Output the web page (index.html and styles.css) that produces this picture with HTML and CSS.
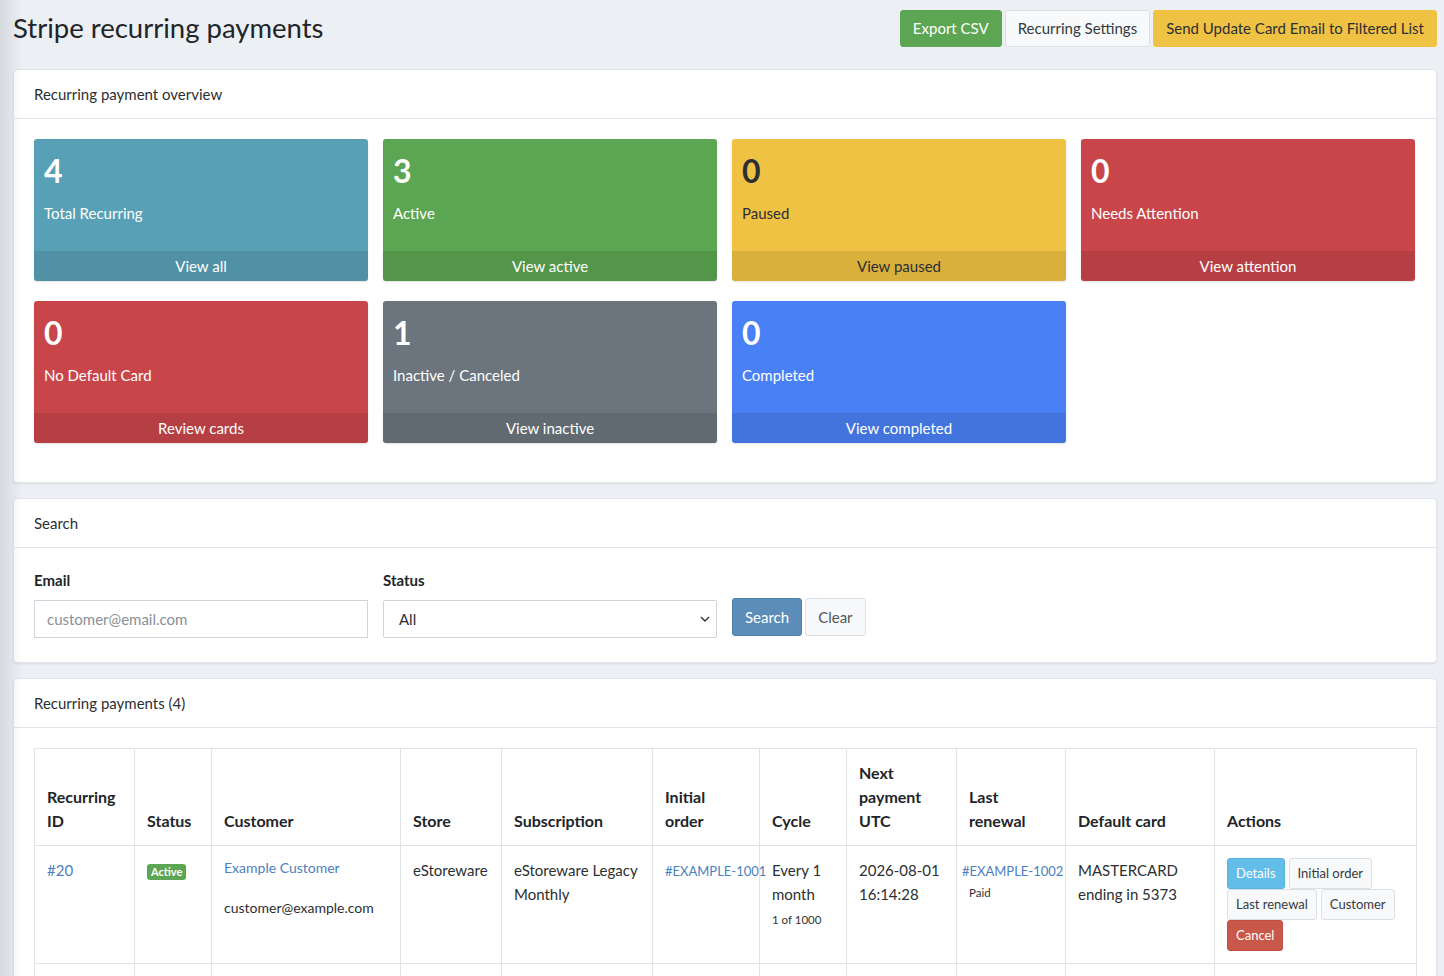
FILE: index.html
```html
<!DOCTYPE html>
<html lang="en">
<head>
    <meta charset="UTF-8">
    <meta name="viewport" content="width=device-width, initial-scale=1.0">
    <title>Stripe recurring payments</title>
    <link rel="stylesheet" href="styles.css">
</head>
<body>
    <div class="page">
        <!-- page header -->
        <div class="page-head">
            <h1>Stripe recurring payments</h1>
            <div class="head-actions">
                <a class="btn btn-success">Export CSV</a>
                <a class="btn btn-light">Recurring Settings</a>
                <a class="btn btn-warning">Send Update Card Email to Filtered List</a>
            </div>
        </div>

        <!-- overview -->
        <div class="card">
            <div class="card-header">Recurring payment overview</div>
            <div class="card-body">
                <div class="tiles">
                    <div class="tile tile-info">
                        <div class="tile-body"><div class="tile-num">4</div><div class="tile-label">Total Recurring</div></div>
                        <a class="tile-foot">View all</a>
                    </div>
                    <div class="tile tile-success">
                        <div class="tile-body"><div class="tile-num">3</div><div class="tile-label">Active</div></div>
                        <a class="tile-foot">View active</a>
                    </div>
                    <div class="tile tile-warning">
                        <div class="tile-body"><div class="tile-num">0</div><div class="tile-label">Paused</div></div>
                        <a class="tile-foot">View paused</a>
                    </div>
                    <div class="tile tile-danger">
                        <div class="tile-body"><div class="tile-num">0</div><div class="tile-label">Needs Attention</div></div>
                        <a class="tile-foot">View attention</a>
                    </div>
                    <div class="tile tile-danger">
                        <div class="tile-body"><div class="tile-num">0</div><div class="tile-label">No Default Card</div></div>
                        <a class="tile-foot">Review cards</a>
                    </div>
                    <div class="tile tile-secondary">
                        <div class="tile-body"><div class="tile-num">1</div><div class="tile-label">Inactive / Canceled</div></div>
                        <a class="tile-foot">View inactive</a>
                    </div>
                    <div class="tile tile-primary">
                        <div class="tile-body"><div class="tile-num">0</div><div class="tile-label">Completed</div></div>
                        <a class="tile-foot">View completed</a>
                    </div>
                </div>
            </div>
        </div>

        <!-- search -->
        <div class="card">
            <div class="card-header">Search</div>
            <div class="card-body search-body">
                <form class="search-form">
                    <div class="field">
                        <label>Email</label>
                        <input type="text" placeholder="customer@email.com">
                    </div>
                    <div class="field">
                        <label>Status</label>
                        <div class="select">All</div>
                    </div>
                    <div class="form-buttons">
                        <button type="button" class="btn btn-primary">Search</button>
                        <button type="button" class="btn btn-light">Clear</button>
                    </div>
                </form>
            </div>
        </div>

        <!-- list -->
        <div class="card">
            <div class="card-header">Recurring payments (4)</div>
            <div class="card-body">
                <table class="list">
                    <thead>
                        <tr>
                            <th class="c-id">Recurring ID</th>
                            <th class="c-status">Status</th>
                            <th class="c-customer">Customer</th>
                            <th class="c-store">Store</th>
                            <th class="c-sub">Subscription</th>
                            <th class="c-order">Initial order</th>
                            <th class="c-cycle">Cycle</th>
                            <th class="c-next">Next payment UTC</th>
                            <th class="c-renewal">Last renewal</th>
                            <th class="c-card">Default card</th>
                            <th class="c-actions">Actions</th>
                        </tr>
                    </thead>
                    <tbody>
                        <tr>
                            <td><a class="link">#20</a></td>
                            <td><span class="badge">Active</span></td>
                            <td class="small-text"><a class="link">Example Customer</a><br><br>customer@example.com</td>
                            <td>eStoreware</td>
                            <td>eStoreware Legacy Monthly</td>
                            <td><a class="link order-link">#EXAMPLE-1001</a></td>
                            <td>Every 1 month<div class="note cycle-note">1 of 1000</div></td>
                            <td>2026-08-01 16:14:28</td>
                            <td><a class="link order-link renewal-link">#EXAMPLE-1002</a><div class="note">Paid</div></td>
                            <td>MASTERCARD ending in 5373</td>
                            <td>
                                <div class="row-actions">
                                    <a class="btn btn-sm btn-info">Details</a>
                                    <a class="btn btn-sm btn-light">Initial order</a>
                                    <a class="btn btn-sm btn-light">Last renewal</a>
                                    <a class="btn btn-sm btn-light">Customer</a>
                                    <a class="btn btn-sm btn-danger">Cancel</a>
                                </div>
                            </td>
                        </tr>
                        <tr>
                            <td>&nbsp;</td><td></td><td></td><td></td><td></td><td></td><td></td><td></td><td></td><td></td><td></td>
                        </tr>
                    </tbody>
                </table>
            </div>
        </div>
    </div>
</body>
</html>
```

FILE: styles.css
```css
/* base */
html, body {
    margin: 0;
    padding: 0;
    background: #eceff4;
    font-family: Lato, "Open Sans", sans-serif;
    font-size: 15px;
    color: #2b2f33;
}
.page {
    padding: 10px 7px 0 13px;
}
/* soft shadow from the left edge */
.page::before {
    content: "";
    position: fixed;
    left: 0;
    top: 0;
    bottom: 0;
    width: 22px;
    background: linear-gradient(to right, rgba(0,0,0,0.09), rgba(0,0,0,0));
    pointer-events: none;
}
a { text-decoration: none; }

/* header */
.page-head {
    display: flex;
    justify-content: space-between;
    align-items: flex-start;
    margin-bottom: 22px;
}
.page-head h1 {
    margin: 0;
    font-size: 27.5px;
    font-weight: 400;
    color: #212529;
    line-height: 36px;
}
.head-actions {
    display: flex;
    gap: 3px;
}

/* buttons */
.btn {
    display: inline-block;
    box-sizing: border-box;
    height: 37px;
    line-height: 35px;
    padding: 0 12px;
    border: 1px solid transparent;
    border-radius: 3px;
    font-family: inherit;
    font-size: 15px;
    color: #fff;
    cursor: pointer;
}
.btn-success { background: #5ca552; border-color: #5ca552; }
.btn-light { background: #f8f9fa; border-color: #dcdfe3; color: #343a40; }
.btn-warning { background: #f0c244; border-color: #f0c244; color: #2b2f33; }
.btn-primary { background: #5b8db8; border-color: #4f80aa; }
.btn-info { background: #62bde9; border-color: #56b2df; }
.btn-danger { background: #c9574a; border-color: #c04e41; }
.btn-sm {
    height: 31px;
    line-height: 29px;
    padding: 0 8px;
    font-size: 13px;
}

/* cards */
.card {
    background: #fff;
    border: 1px solid #e2e5e9;
    border-radius: 4px;
    box-shadow: 0 1px 2px rgba(0,0,0,0.08);
    margin-bottom: 15px;
}
.card-header {
    height: 48px;
    line-height: 48px;
    padding: 0 20px;
    border-bottom: 1px solid #e3e5e8;
    font-size: 15px;
    color: #2b2f33;
}
.card-body {
    padding: 20px;
}

/* overview tiles */
.tiles {
    display: grid;
    grid-template-columns: repeat(4, 334px);
    column-gap: 15px;
    row-gap: 20px;
    margin-bottom: 19px;
}
.tile {
    height: 142px;
    border-radius: 3px;
    color: #fff;
    display: flex;
    flex-direction: column;
    overflow: hidden;
    box-shadow: 0 1px 2px rgba(0,0,0,0.12);
}
.tile-body {
    flex: 1;
    padding: 12px 10px 0;
}
.tile-num {
    font-size: 32px;
    font-weight: 700;
    line-height: 40px;
}
.tile-label {
    margin-top: 13px;
    font-size: 15px;
}
.tile-foot {
    height: 30px;
    line-height: 30px;
    text-align: center;
    background: rgba(0,0,0,0.09);
    color: inherit;
    font-size: 15px;
}
.tile-info { background: #58a0b6; }
.tile-success { background: #5ca552; }
.tile-warning { background: #f0c244; color: #2b2f33; }
.tile-danger { background: #c8464a; }
.tile-secondary { background: #6c757d; }
.tile-primary { background: #4a80f5; }

/* search form */
.search-body {
    padding-bottom: 24px;
}
.search-form {
    display: flex;
    align-items: flex-end;
    gap: 15px;
}
.field {
    width: 334px;
}
.field label {
    display: block;
    font-weight: 700;
    font-size: 15px;
    line-height: 24px;
    margin-bottom: 8px;
    color: #212529;
}
.field input, .select {
    box-sizing: border-box;
    width: 100%;
    height: 38px;
    border: 1px solid #ced4da;
    padding: 0 12px;
    font-family: inherit;
    font-size: 15px;
    color: #2b2f33;
    outline: none;
}
.field input::placeholder { color: #8a9096; }
.select {
    line-height: 36px;
    padding-left: 15px;
    border-radius: 2px;
    background:
        url("data:image/svg+xml,%3Csvg xmlns='http://www.w3.org/2000/svg' width='10' height='6'%3E%3Cpath d='M1 1l4 4 4-4' fill='none' stroke='%23333' stroke-width='1.4'/%3E%3C/svg%3E") no-repeat right 6px center;
}
.form-buttons {
    display: flex;
    gap: 3px;
    padding-bottom: 2px;
}
.form-buttons .btn {
    height: 38px;
    line-height: 36px;
}
.form-buttons .btn-light { color: #555; }

/* table */
.list {
    width: 100%;
    border-collapse: collapse;
    table-layout: fixed;
}
.list th, .list td {
    border: 1px solid #e0e2e5;
    padding: 12px;
    line-height: 24px;
    text-align: left;
}
.list th {
    vertical-align: bottom;
    font-weight: 700;
    font-size: 16px;
    color: #212529;
}
.list td {
    vertical-align: top;
    color: #2b2f33;
}
.c-id { width: 75px; }
.c-status { width: 52px; }
.c-customer { width: 164px; }
.c-store { width: 76px; }
.c-sub { width: 126px; }
.c-order { width: 82px; }
.c-cycle { width: 62px; }
.c-next { width: 85px; }
.c-renewal { width: 84px; }
.c-card { width: 124px; }
.c-actions { width: 177px; }
.link { color: #4b7fc0; }
.list td.small-text {
    font-size: 14px;
    line-height: 20px;
}
.order-link {
    font-size: 13px;
    white-space: nowrap;
}
.renewal-link {
    display: inline-block;
    margin-left: -7px;
}
.note {
    font-size: 11.5px;
    line-height: 20px;
    color: #333;
}
.cycle-note {
    margin-top: 4px;
}
.badge {
    display: inline-block;
    background: #5ca552;
    color: #fff;
    font-size: 11px;
    font-weight: 700;
    line-height: 16px;
    padding: 0 4px;
    border-radius: 3px;
}
.row-actions {
    display: flex;
    flex-wrap: wrap;
    column-gap: 4px;
}
```
